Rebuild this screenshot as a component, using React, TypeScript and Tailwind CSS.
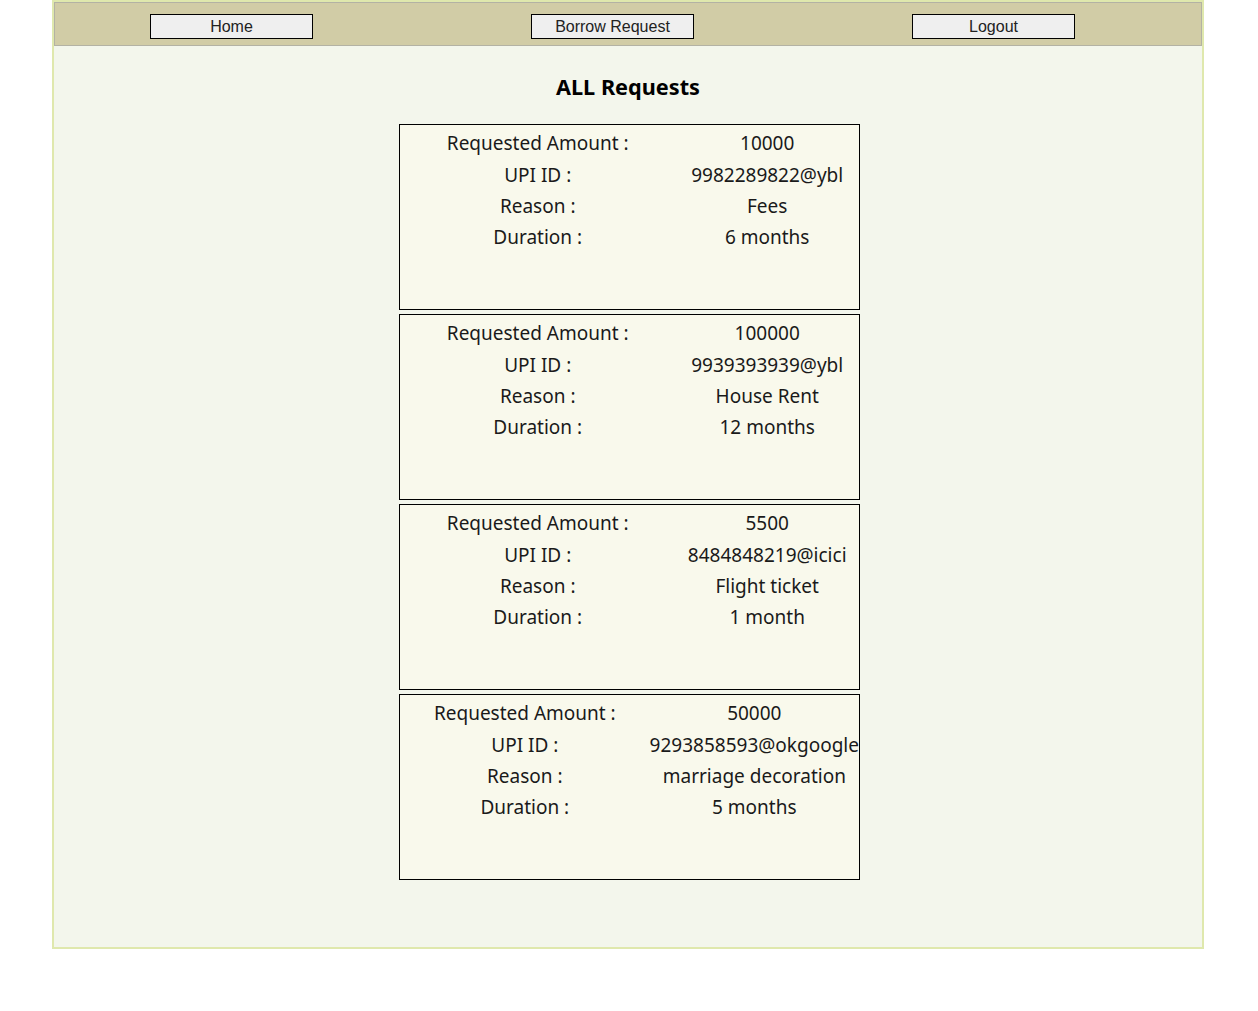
import React from 'react';

type Request = {
  amount: string;
  upi: string;
  reason: string;
  duration: string;
};

const requests: Request[] = [
  { amount: '10000', upi: '9982289822@ybl', reason: 'Fees', duration: '6 months' },
  { amount: '100000', upi: '9939393939@ybl', reason: 'House Rent', duration: '12 months' },
  { amount: '5500', upi: '8484848219@icici', reason: 'Flight ticket', duration: '1 month' },
  { amount: '50000', upi: '9293858593@okgoogle', reason: 'marriage decoration', duration: '5 months' },
];

const NavButton: React.FC<{ label: string }> = ({ label }) => (
  <button className="w-[163px] h-[25px] bg-[#efefef] border border-black text-[16px] leading-none pt-[1px] text-[#222] font-['Liberation_Sans',Arial,sans-serif]">
    {label}
  </button>
);

const RequestCard: React.FC<{ req: Request }> = ({ req }) => {
  const rows: [string, string][] = [
    ['Requested Amount :', req.amount],
    ['UPI ID :', req.upi],
    ['Reason :', req.reason],
    ['Duration :', req.duration],
  ];
  return (
    <div className="w-[461px] h-[186px] border border-black bg-[#f9f9ec] pt-[3px]">
      <table className="w-full text-[#1a1a1a] text-[19px]">
        <tbody>
          {rows.map(([label, value]) => (
            <tr key={label} className="h-[31.3px]">
              <td className="w-[60%] text-center whitespace-nowrap">{label}</td>
              <td className="text-center whitespace-nowrap">{value}</td>
            </tr>
          ))}
        </tbody>
      </table>
    </div>
  );
};

const App: React.FC = () => {
  return (
    <div className="min-h-screen bg-white font-['Noto_Sans','Open_Sans',sans-serif]">
      <div className="w-[1152px] ml-[52px] border-2 border-[#dfe8ad] bg-[#f3f6ec] pb-[67px]">
        {/* Nav */}
        <nav className="h-[44px] bg-[#d1cca6] border border-[#b3b2a4] flex items-start gap-[218px] pl-[95px] pt-[11px]">
          <NavButton label="Home" />
          <NavButton label="Borrow Request" />
          <NavButton label="Logout" />
        </nav>

        <h2 className="text-center text-[21.7px] font-bold text-black mt-[26px] mb-[22px] leading-[30px]">
          ALL Requests
        </h2>

        <div className="flex flex-col items-center gap-[4px] pl-[3px]">
          {requests.map((r) => (
            <RequestCard key={r.upi} req={r} />
          ))}
        </div>
      </div>
    </div>
  );
};

export default App;
